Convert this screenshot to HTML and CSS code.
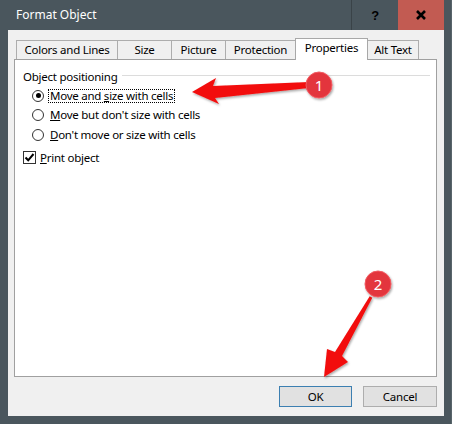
FILE: index.html
```html
<!DOCTYPE html>
<html lang="en">
<head>
    <meta charset="UTF-8">
    <title>Format Object</title>
    <link rel="stylesheet" href="styles.css">
</head>
<body>
    <div class="window">
        <div class="titlebar">
            <span class="title">Format Object</span>
            <div class="caption-btn help">?</div>
            <div class="caption-btn close">
                <svg width="12" height="12" viewBox="0 0 12 12"><path d="M2 2 L10 10 M10 2 L2 10" stroke="#000" stroke-width="2.6"/></svg>
            </div>
        </div>
        <div class="client">
            <div class="tabs">
                <div class="tab t1">Colors and Lines</div>
                <div class="tab t2">Size</div>
                <div class="tab t3">Picture</div>
                <div class="tab t4">Protection</div>
                <div class="tab t5 selected">Properties</div>
                <div class="tab t6">Alt Text</div>
            </div>
            <div class="panel">
                <div class="group-head">
                    <span>Object positioning</span>
                    <div class="group-line"></div>
                </div>
                <div class="options">
                    <div class="option">
                        <span class="radio checked"></span>
                        <span class="label focus">Move and <u>s</u>ize with cells</span>
                    </div>
                    <div class="option">
                        <span class="radio"></span>
                        <span class="label"><u>M</u>ove but don't size with cells</span>
                    </div>
                    <div class="option">
                        <span class="radio"></span>
                        <span class="label"><u>D</u>on't move or size with cells</span>
                    </div>
                </div>
                <div class="option check-row">
                    <span class="checkbox">
                        <svg width="11" height="11" viewBox="0 0 11 11"><path d="M1.5 5.5 L4.2 8.3 L9.5 2" fill="none" stroke="#000" stroke-width="2"/></svg>
                    </span>
                    <span class="label"><u>P</u>rint object</span>
                </div>
            </div>
            <div class="buttons">
                <div class="btn default">OK</div>
                <div class="btn">Cancel</div>
            </div>
        </div>
    </div>

    <svg class="annotations" width="452" height="424" viewBox="0 0 452 424">
        <defs>
            <filter id="shadow" x="-20%" y="-20%" width="140%" height="140%">
                <feDropShadow dx="1" dy="1.5" stdDeviation="1.2" flood-color="#000" flood-opacity="0.35"/>
            </filter>
        </defs>
        <polygon filter="url(#shadow)" fill="#f20d0d"
            points="192,92 216,78 213,86 309,82 309,88 215,98 219,104"/>
        <polygon filter="url(#shadow)" fill="#f20d0d"
            points="324,377 327,349 335,352 369.7,296.2 372.3,297.8 342,356 348,362"/>
        <g filter="url(#shadow)">
            <circle cx="319" cy="85" r="13" fill="#e3343d" stroke="#f25a60" stroke-width="1"/>
            <circle cx="378" cy="284" r="13" fill="#e3343d" stroke="#f25a60" stroke-width="1"/>
        </g>
        <text class="num" x="319" y="90.5">1</text>
        <text class="num" x="378" y="289.5">2</text>
    </svg>
</body>
</html>
```

FILE: styles.css
```css
body {
    margin: 0;
    padding: 0;
    font-family: 'Noto Sans', 'Open Sans', sans-serif;
    font-size: 11.5px;
    letter-spacing: -0.25px;
    color: #000;
    background-color: #4a565d;
}

.window {
    width: 452px;
    height: 424px;
    background-color: #4a565d;
    display: flex;
    flex-direction: column;
    box-sizing: border-box;
    border-right: 1px solid #59656b;
}

.titlebar {
    height: 30px;
    display: flex;
    align-items: stretch;
}

.title {
    flex: 1;
    color: #fff;
    padding-left: 16px;
    line-height: 30px;
    font-size: 12px;
    letter-spacing: 0;
}

.caption-btn {
    width: 46px;
    display: flex;
    align-items: center;
    justify-content: center;
}

.help {
    border-left: 1px solid #3a4348;
    font-weight: bold;
    font-size: 13px;
    font-family: 'Liberation Sans', sans-serif;
}

.close {
    width: 46px;
    margin-right: 7px;
    background-color: #c25b52;
}

.client {
    flex: 1;
    margin: 0 7px 8px 8px;
    background-color: #f0f0f0;
    padding: 8px 0 0 6px;
    display: flex;
    flex-direction: column;
}

.tabs {
    display: flex;
    align-items: flex-end;
    height: 21px;
    padding-left: 2px;
    position: relative;
    z-index: 1;
}

.tab {
    box-sizing: border-box;
    height: 19px;
    border: 1px solid #adadad;
    border-bottom: none;
    margin-right: -1px;
    text-align: center;
    line-height: 18px;
    background-color: #f0f0f0;
}

.t1 { width: 102px; }
.t2 { width: 55px; }
.t3 { width: 55px; }
.t4 { width: 71px; }
.t5 { width: 73px; }
.t6 { width: 52px; }

.tab.selected {
    height: 22px;
    margin-bottom: -1px;
    background-color: #fff;
    border-color: #a8a8a8;
    line-height: 17px;
    position: relative;
    z-index: 2;
}

.panel {
    width: 423px;
    height: 318px;
    box-sizing: border-box;
    border: 1px solid #a0a0a0;
    background-color: #fff;
    padding: 8px 6px 0 8px;
}

.group-head {
    display: flex;
    align-items: center;
    height: 16px;
}

.group-line {
    flex: 1;
    height: 1px;
    background-color: #dcdcdc;
    margin-left: 4px;
    margin-top: -1px;
}

.options {
    margin-top: 2px;
    padding-left: 9px;
}

.option {
    height: 19.5px;
    display: flex;
    align-items: center;
}

.radio {
    width: 12px;
    height: 12px;
    box-sizing: border-box;
    border: 1px solid #333;
    border-radius: 50%;
    background: #fff;
    margin-right: 4px;
    position: relative;
}

.radio.checked::after {
    content: '';
    position: absolute;
    left: 2.5px;
    top: 2.5px;
    width: 5px;
    height: 5px;
    border-radius: 50%;
    background: #000;
}

.label {
    padding: 0 1px;
    border: 1px dotted transparent;
    line-height: 12px;
}

.label.focus {
    border-color: #000;
}

.check-row {
    margin-top: 3.5px;
}

.checkbox {
    width: 13px;
    height: 13px;
    box-sizing: border-box;
    border: 1px solid #333;
    background: #fff;
    margin-right: 2px;
    display: flex;
    align-items: center;
    justify-content: center;
}

.buttons {
    display: flex;
    justify-content: flex-end;
    gap: 11px;
    width: 423px;
    margin-top: 9px;
}

.btn {
    box-sizing: border-box;
    height: 21px;
    line-height: 19px;
    text-align: center;
    background-color: #e1e1e1;
    border: 1px solid #adadad;
    width: 74px;
}

.btn.default {
    width: 73px;
    border-color: #3c7fb1;
}

.annotations {
    position: absolute;
    left: 0;
    top: 0;
    pointer-events: none;
}

.num {
    fill: #fff;
    font-family: 'Noto Sans', sans-serif;
    font-size: 15px;
    text-anchor: middle;
    letter-spacing: 0;
}
```
